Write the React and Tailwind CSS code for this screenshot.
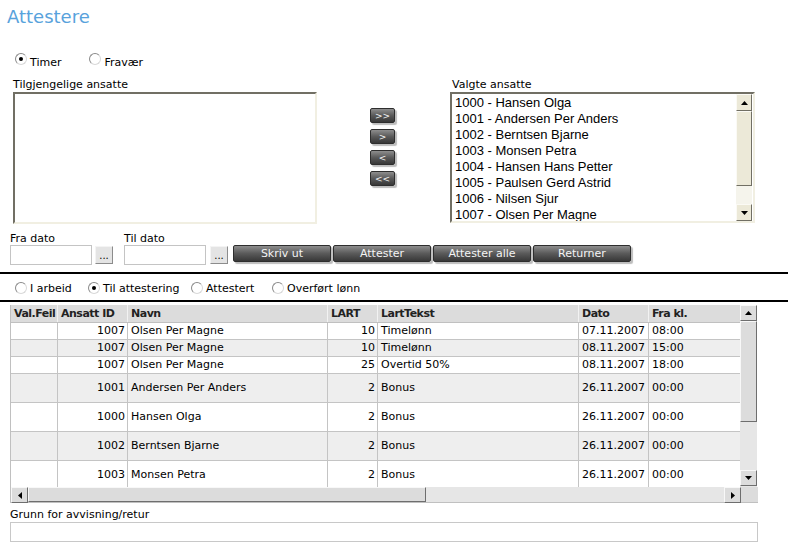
import React from 'react';

const employees = [
    '1000 - Hansen Olga',
    '1001 - Andersen Per Anders',
    '1002 - Berntsen Bjarne',
    '1003 - Monsen Petra',
    '1004 - Hansen Hans Petter',
    '1005 - Paulsen Gerd Astrid',
    '1006 - Nilsen Sjur',
    '1007 - Olsen Per Magne',
];

const rows = [
    { id: '1007', navn: 'Olsen Per Magne', lart: '10', tekst: 'Timelønn', dato: '07.11.2007', kl: '08:00', h: 'h-[17px]' },
    { id: '1007', navn: 'Olsen Per Magne', lart: '10', tekst: 'Timelønn', dato: '08.11.2007', kl: '15:00', h: 'h-[17px]' },
    { id: '1007', navn: 'Olsen Per Magne', lart: '25', tekst: 'Overtid 50%', dato: '08.11.2007', kl: '18:00', h: 'h-[17px]' },
    { id: '1001', navn: 'Andersen Per Anders', lart: '2', tekst: 'Bonus', dato: '26.11.2007', kl: '00:00', h: 'h-[29px]' },
    { id: '1000', navn: 'Hansen Olga', lart: '2', tekst: 'Bonus', dato: '26.11.2007', kl: '00:00', h: 'h-[29px]' },
    { id: '1002', navn: 'Berntsen Bjarne', lart: '2', tekst: 'Bonus', dato: '26.11.2007', kl: '00:00', h: 'h-[29px]' },
    { id: '1003', navn: 'Monsen Petra', lart: '2', tekst: 'Bonus', dato: '26.11.2007', kl: '00:00', h: 'h-[29px]' },
];

const Radio = ({ checked }) => (
    <span className="w-[12px] h-[12px] rounded-full border border-t-[#8a8a8a] border-l-[#8a8a8a] border-r-[#d8d8d8] border-b-[#d8d8d8] bg-white flex items-center justify-center shrink-0">
        {checked && <span className="w-[4px] h-[4px] rounded-full bg-black" />}
    </span>
);

const Tri = ({ dir }) => {
    const pts = {
        up: '0,4 7,4 3.5,0',
        down: '0,0 7,0 3.5,4',
        left: '4,0 4,7 0,3.5',
        right: '0,0 0,7 4,3.5',
    }[dir];
    const w = dir === 'up' || dir === 'down' ? 7 : 4;
    const h = dir === 'up' || dir === 'down' ? 4 : 7;
    return (
        <svg width={w} height={h} viewBox={`0 0 ${w} ${h}`}>
            <polygon points={pts} fill="#000" />
        </svg>
    );
};

// dark bevelled image-like button
const DarkBtn = ({ children, className = '' }) => (
    <div className={`flex items-center justify-center rounded-[2px] border border-[#2e2e2e] bg-linear-to-b from-[#8e8e8e] via-[#5a5a5a] to-[#383838] text-[#f4f4f4] shadow-[2px_2px_1px_#bdbdbd] ${className}`}>
        {children}
    </div>
);

const DotsBtn = () => (
    <div className="w-[18px] h-[18px] mt-[1px] border border-t-[#f4f4f4] border-l-[#f4f4f4] border-r-[#8c8c8c] border-b-[#8c8c8c] bg-[#e4e4e4] flex items-end justify-center text-[10px] leading-[12px] pb-[1px]">
        ...
    </div>
);

const BeigeBtn = ({ dir }) => (
    <div className="w-[16px] h-[17px] bg-[#ece9d8] border border-t-[#fbfaf5] border-l-[#fbfaf5] border-r-[#716f64] border-b-[#716f64] flex items-center justify-center shrink-0">
        <Tri dir={dir} />
    </div>
);

const GrayBtn = ({ dir, className = '' }) => (
    <div className={`w-[17px] h-[16px] bg-[#dcdcdc] border border-t-[#f8f8f8] border-l-[#f8f8f8] border-r-[#6e6e6e] border-b-[#6e6e6e] flex items-center justify-center shrink-0 ${className}`}>
        <Tri dir={dir} />
    </div>
);

const cols = ['w-[47px]', 'w-[70px]', 'w-[200px]', 'w-[50px]', 'w-[201px]', 'w-[70px]', 'w-[92px]'];

const App = () => {
    return (
        <div className="w-[793px] h-[554px] overflow-hidden bg-white text-black text-[11px] leading-[14px] font-['DejaVu_Sans',sans-serif]">
            {/* Title */}
            <div className="pl-[7px] pt-[6px] text-[18px] leading-[22px] text-[#58a2dc]">Attestere</div>

            {/* Timer / Fravær */}
            <div className="mt-[25px] h-[14px] flex items-start pl-[15px]">
                <Radio checked />
                <span className="ml-[3px] mt-[3px]">Timer</span>
                <span className="ml-[28px]"><Radio /></span>
                <span className="ml-[3px] mt-[3px]">Fravær</span>
            </div>

            {/* Employee lists */}
            <div className="mt-[11px] flex items-start">
                <div className="ml-[13px] w-[304px]">
                    <div className="h-[14px]">Tilgjengelige ansatte</div>
                    <div className="h-[132px] bg-white border-2 border-t-[#716f64] border-l-[#716f64] border-r-[#f1efe2] border-b-[#f1efe2]" />
                </div>

                <div className="ml-[53px] pt-[30px] flex flex-col gap-[6px] text-[9px] leading-[10px]">
                    <DarkBtn className="w-[25px] h-[15px]">&gt;&gt;</DarkBtn>
                    <DarkBtn className="w-[25px] h-[15px]">&gt;</DarkBtn>
                    <DarkBtn className="w-[25px] h-[15px]">&lt;</DarkBtn>
                    <DarkBtn className="w-[25px] h-[15px]">&lt;&lt;</DarkBtn>
                </div>

                <div className="ml-[55px] w-[305px]">
                    <div className="h-[14px] pl-[2px]">Valgte ansatte</div>
                    <div className="h-[131px] flex bg-white border-2 border-t-[#716f64] border-l-[#716f64] border-r-[#f1efe2] border-b-[#f1efe2] overflow-hidden">
                        <div className="flex-1 pl-[3px] pt-[1px] font-['Liberation_Sans',Arial,sans-serif] text-[13px] leading-[16px] overflow-hidden">
                            {employees.map((e) => (
                                <div key={e} className="whitespace-nowrap">{e}</div>
                            ))}
                        </div>
                        <div className="w-[16px] flex flex-col mr-[1px]">
                            <BeigeBtn dir="up" />
                            <div className="h-[75px] bg-[#ece9d8] border border-t-[#fbfaf5] border-l-[#fbfaf5] border-r-[#716f64] border-b-[#716f64]" />
                            <div className="flex-1 bg-[#f5f4ec]" />
                            <BeigeBtn dir="down" />
                        </div>
                    </div>
                </div>
            </div>

            {/* Dates + action buttons */}
            <div className="mt-[10px] flex items-start">
                <div className="ml-[10px]">
                    <div className="h-[11px] leading-[10px]">Fra dato</div>
                    <div className="flex gap-[3px]">
                        <div className="w-[82px] h-[20px] border border-[#c4c4c4] bg-white" />
                        <DotsBtn />
                    </div>
                </div>
                <div className="ml-[11px]">
                    <div className="h-[11px] leading-[10px]">Til dato</div>
                    <div className="flex gap-[4px]">
                        <div className="w-[82px] h-[20px] border border-[#c4c4c4] bg-white" />
                        <DotsBtn />
                    </div>
                </div>
                <div className="ml-[5px] pt-[11px] flex gap-[2px]">
                    <DarkBtn className="w-[98px] h-[17px]">Skriv ut</DarkBtn>
                    <DarkBtn className="w-[98px] h-[17px]">Attester</DarkBtn>
                    <DarkBtn className="w-[98px] h-[17px]">Attester alle</DarkBtn>
                    <DarkBtn className="w-[98px] h-[17px]">Returner</DarkBtn>
                </div>
            </div>

            <div className="mt-[7px] w-[788px] h-[2px] bg-black" />

            {/* Status filter */}
            <div className="mt-[7px] h-[14px] flex items-center pl-[15px]">
                {[
                    ['I arbeid', false, 'w-[73px]'],
                    ['Til attestering', true, 'w-[103px]'],
                    ['Attestert', false, 'w-[81px]'],
                    ['Overført lønn', false, 'w-[120px]'],
                ].map(([label, checked, w]) => (
                    <div key={label} className={`${w} flex items-center`}>
                        <Radio checked={checked} />
                        <span className="ml-[3px] mt-[2px]">{label}</span>
                    </div>
                ))}
            </div>

            <div className="mt-[5px] w-[788px] h-[2px] bg-black" />

            {/* Grid */}
            <div className="mt-[3px] ml-[10px] w-[748px]">
                <div className="h-[182px] flex">
                    <div className="w-[730px] overflow-hidden border-l border-[#c0c0c0]">
                        <div className="h-[18px] flex bg-[#dcdcdc] border-b border-[#c0c0c0] font-bold text-[#222] tracking-[-0.5px]">
                            {['Val.Feil', 'Ansatt ID', 'Navn', 'LART', 'LartTekst', 'Dato', 'Fra kl.'].map((h, i) => (
                                <div key={h} className={`${cols[i]} shrink-0 flex items-center pl-[3px] border-r border-[#f2f2f2]`}>
                                    {h}
                                </div>
                            ))}
                        </div>
                        {rows.map((r, i) => (
                            <div key={i} className={`${r.h} flex border-b border-[#c4c4c4] ${i % 2 ? 'bg-[#eeeeee]' : 'bg-white'}`}>
                                <div className={`${cols[0]} shrink-0 border-r border-[#c4c4c4]`} />
                                <div className={`${cols[1]} shrink-0 border-r border-[#c4c4c4] flex items-center justify-end pr-[2px]`}>{r.id}</div>
                                <div className={`${cols[2]} shrink-0 border-r border-[#c4c4c4] flex items-center pl-[3px]`}>{r.navn}</div>
                                <div className={`${cols[3]} shrink-0 border-r border-[#c4c4c4] flex items-center justify-end pr-[2px]`}>{r.lart}</div>
                                <div className={`${cols[4]} shrink-0 border-r border-[#c4c4c4] flex items-center pl-[3px]`}>{r.tekst}</div>
                                <div className={`${cols[5]} shrink-0 border-r border-[#c4c4c4] flex items-center pl-[3px]`}>{r.dato}</div>
                                <div className={`${cols[6]} shrink-0 flex items-center pl-[3px]`}>{r.kl}</div>
                            </div>
                        ))}
                    </div>
                    <div className="w-[17px] flex flex-col bg-[#e6e6e6]">
                        <GrayBtn dir="up" />
                        <div className="h-[101px] bg-[#dcdcdc] border border-t-[#f8f8f8] border-l-[#f8f8f8] border-r-[#6e6e6e] border-b-[#6e6e6e]" />
                        <div className="flex-1" />
                        <GrayBtn dir="down" className="mb-[1px]" />
                    </div>
                </div>
                <div className="h-[16px] flex border-b border-l border-[#c0c0c0] bg-[#e6e6e6]">
                    <GrayBtn dir="left" />
                    <div className="w-[398px] bg-[#dcdcdc] border border-t-[#f8f8f8] border-l-[#f8f8f8] border-r-[#6e6e6e] border-b-[#6e6e6e]" />
                    <div className="flex-1" />
                    <GrayBtn dir="right" />
                    <div className="w-[17px] bg-[#dcdcdc]" />
                </div>
            </div>

            {/* Reason */}
            <div className="mt-[6px] ml-[10px]">
                <div className="h-[13px] leading-[12px]">Grunn for avvisning/retur</div>
                <div className="w-[748px] h-[20px] border border-[#c8c8c8] bg-white" />
            </div>
        </div>
    );
};

export default App;
